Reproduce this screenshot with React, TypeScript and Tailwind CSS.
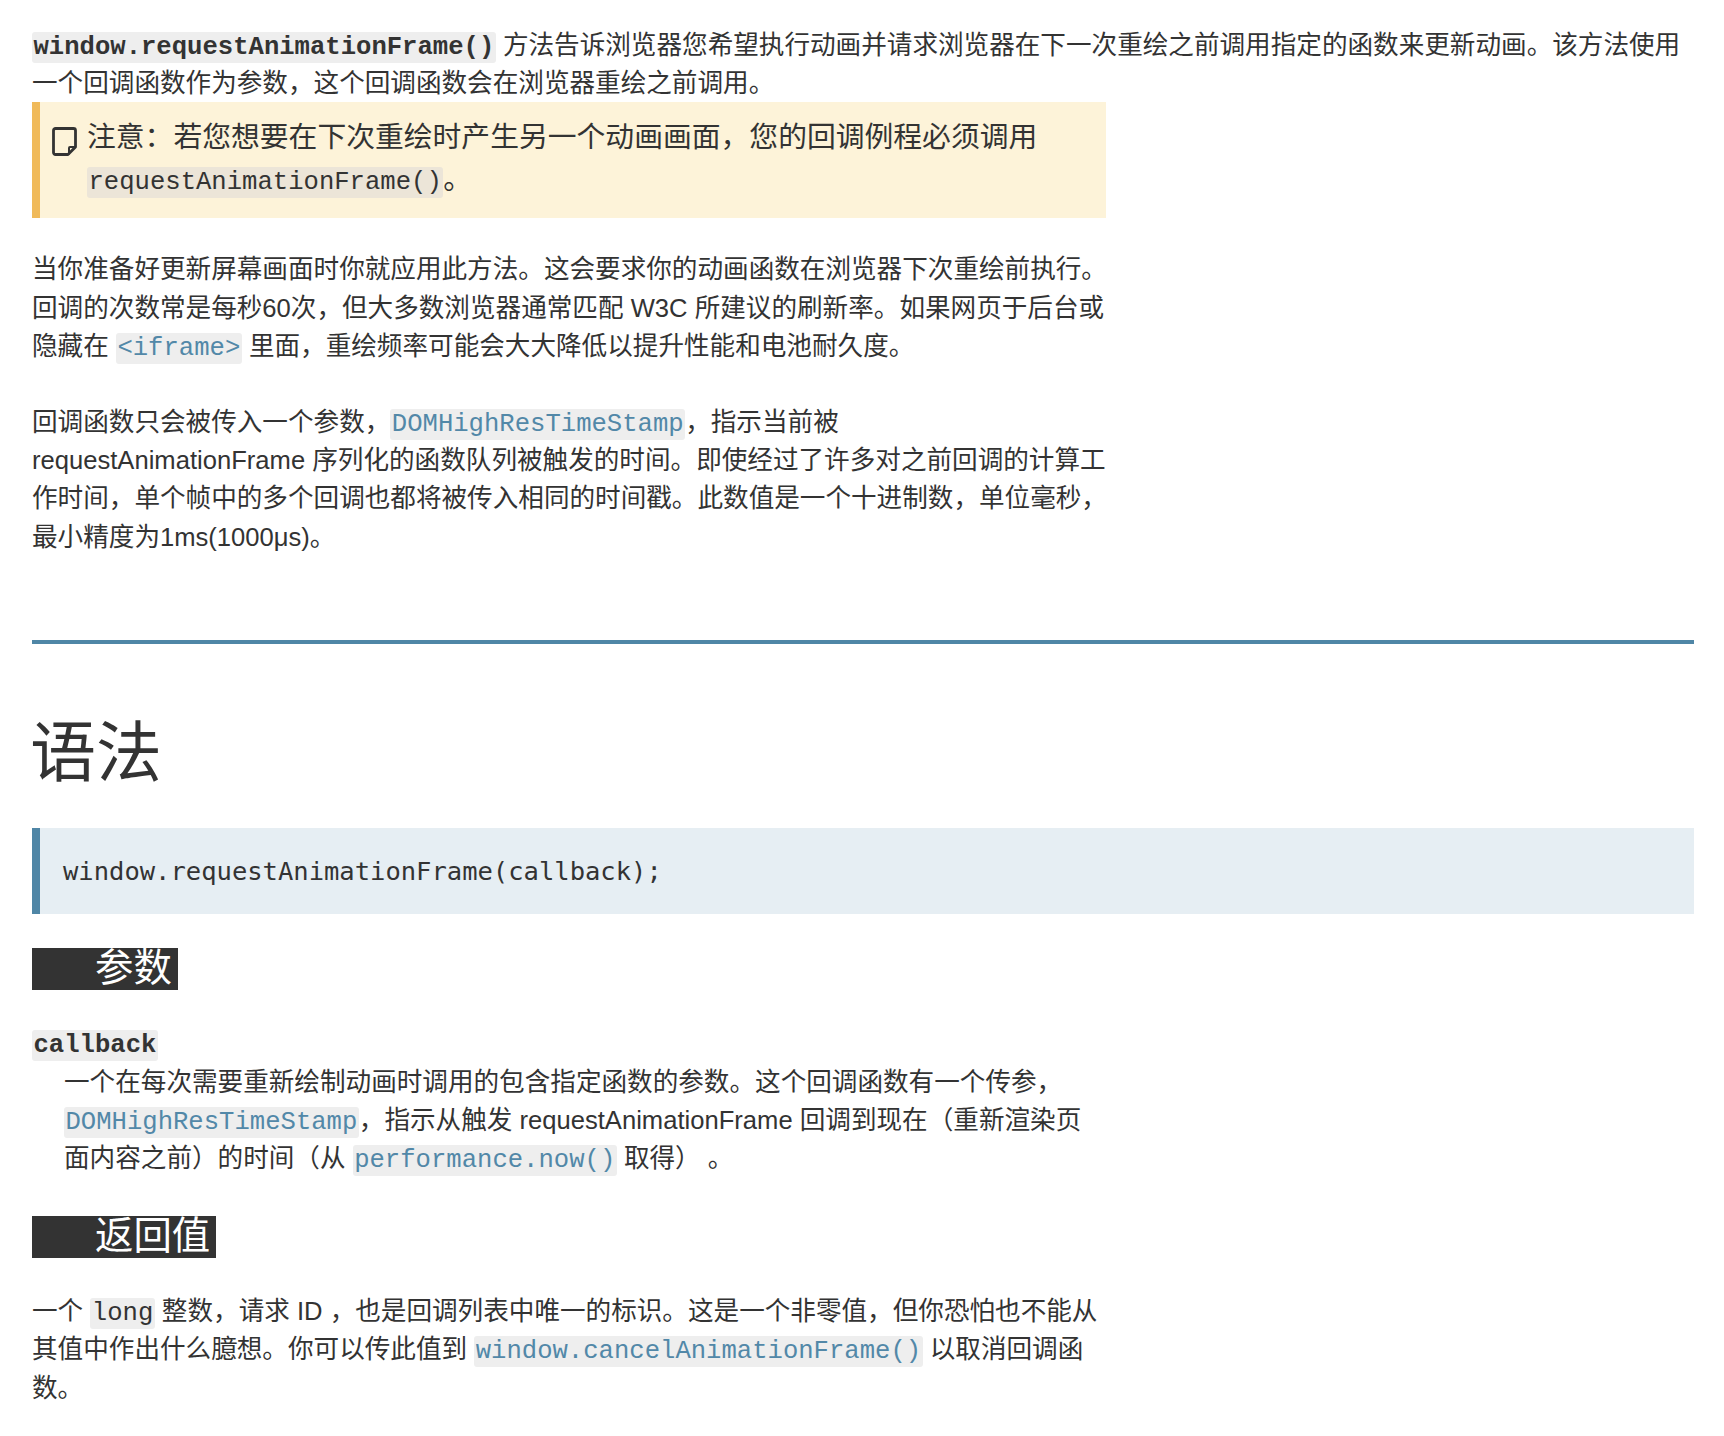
function Code({ children, link, bold, note }: { children: string; link?: boolean; bold?: boolean; note?: boolean }) {
  return (
    <code
      className={[
        "rounded-[3px] px-[1.5px] py-px font-['Liberation_Mono','Noto_Sans_CJK_SC',monospace] text-[25.6px] leading-none",
        note ? 'bg-[#ece5d8]' : 'bg-[#eeeeee]',
        link ? 'text-[#5288a8]' : '',
        bold ? 'font-bold' : '',
      ].join(' ')}
    >
      {children}
    </code>
  );
}

function NoteIcon() {
  return (
    <svg viewBox="0 0 25 29" className="h-[29px] w-[25px] shrink-0" fill="none" stroke="#333333" strokeWidth="2.800" strokeLinejoin="round">
      <path d="M3.500 1.500h18a2 2 0 0 1 2 2v16.500l-7.500 7.500h-12.500a2 2 0 0 1-2-2v-22a2 2 0 0 1 2-2z" />
      <path d="M23.500 20h-5.500a1 1 0 0 0-1 1v6.500" strokeWidth="2" />
    </svg>
  );
}

function SubHeading({ children }: { children: string }) {
  return (
    <h4 className="w-fit bg-[#333333] pr-[6px] pb-[2px] pl-[63px] text-[38.4px] leading-[40px] font-normal text-white">
      {children}
    </h4>
  );
}

export default function App() {
  return (
    <div className="min-h-[1436px] bg-white pt-[25.6px] pr-[30px] pl-8 font-['Liberation_Sans','Noto_Sans_CJK_SC',sans-serif] text-[25.6px] leading-[38.4px] text-[#333333]">
      <p>
        <Code bold>window.requestAnimationFrame()</Code> 方法告诉浏览器您希望执行动画并请求浏览器在下一次重绘之前调用指定的函数来更新动画。该方法使用一个回调函数作为参数&#xFF0C;这个回调函数会在浏览器重绘之前调用。
      </p>

      <div className="flex h-[116px] w-[1074px] gap-[10px] border-l-8 border-[#f0ba5a] bg-[#fdf3d9] pt-[13.5px] pl-3">
        <div className="pt-[11.5px]">
          <NoteIcon />
        </div>
        <p className="whitespace-nowrap text-[28.8px] leading-[42px]">
          注意&#xFF1A;若您想要在下次重绘时产生另一个动画画面&#xFF0C;您的回调例程必须调用
          <br />
          <Code note>requestAnimationFrame()</Code>。
        </p>
      </div>

      <p className="mt-8 w-[1074px] whitespace-nowrap">
        当你准备好更新屏幕画面时你就应用此方法。这会要求你的动画函数在浏览器下次重绘前执行。
        <br />
        回调的次数常是每秒60次&#xFF0C;但大多数浏览器通常匹配 W3C 所建议的刷新率。如果网页于后台或
        <br />
        隐藏在 <Code link>{'<iframe>'}</Code> 里面&#xFF0C;重绘频率可能会大大降低以提升性能和电池耐久度。
      </p>

      <p className="mt-[37px] w-[1074px] whitespace-nowrap">
        回调函数只会被传入一个参数&#xFF0C;<Code link>DOMHighResTimeStamp</Code>&#xFF0C;指示当前被
        <br />
        requestAnimationFrame 序列化的函数队列被触发的时间。即使经过了许多对之前回调的计算工
        <br />
        作时间&#xFF0C;单个帧中的多个回调也都将被传入相同的时间戳。此数值是一个十进制数&#xFF0C;单位毫秒&#xFF0C;
        <br />
        最小精度为1ms(1000μs)。
      </p>

      <hr className="mt-[84px] border-0 border-t-4 border-[#4f86a6]" />

      <h2 className="mt-[64px] -ml-[2px] text-[66px] leading-[90px] font-normal">语法</h2>

      <pre className="mt-[30px] h-[86px] border-l-8 border-[#4f86a6] bg-[#e6eef3] pt-6 pl-[23px] font-['DejaVu_Sans_Mono',monospace] text-[25.5px] leading-[38px]">
        window.requestAnimationFrame(callback);
      </pre>

      <div className="mt-[34px]">
        <SubHeading>参数</SubHeading>
      </div>

      <div className="mt-[34px]">
        <Code bold>callback</Code>
      </div>
      <p className="w-[1074px] whitespace-nowrap pl-8">
        一个在每次需要重新绘制动画时调用的包含指定函数的参数。这个回调函数有一个传参&#xFF0C;
        <br />
        <Code link>DOMHighResTimeStamp</Code>&#xFF0C;指示从触发 requestAnimationFrame 回调到现在&#xFF08;重新渲染页
        <br />
        面内容之前&#xFF09;的时间&#xFF08;从 <Code link>performance.now()</Code> 取得&#xFF09;&nbsp;。
      </p>

      <div className="mt-[38px]">
        <SubHeading>返回值</SubHeading>
      </div>

      <p className="mt-[34px] w-[1074px] whitespace-nowrap">
        一个 <Code>long</Code> 整数&#xFF0C;请求 ID &#xFF0C;也是回调列表中唯一的标识。这是一个非零值&#xFF0C;但你恐怕也不能从
        <br />
        其值中作出什么臆想。你可以传此值到 <Code link>window.cancelAnimationFrame()</Code> 以取消回调函
        <br />
        数。
      </p>
    </div>
  );
}
